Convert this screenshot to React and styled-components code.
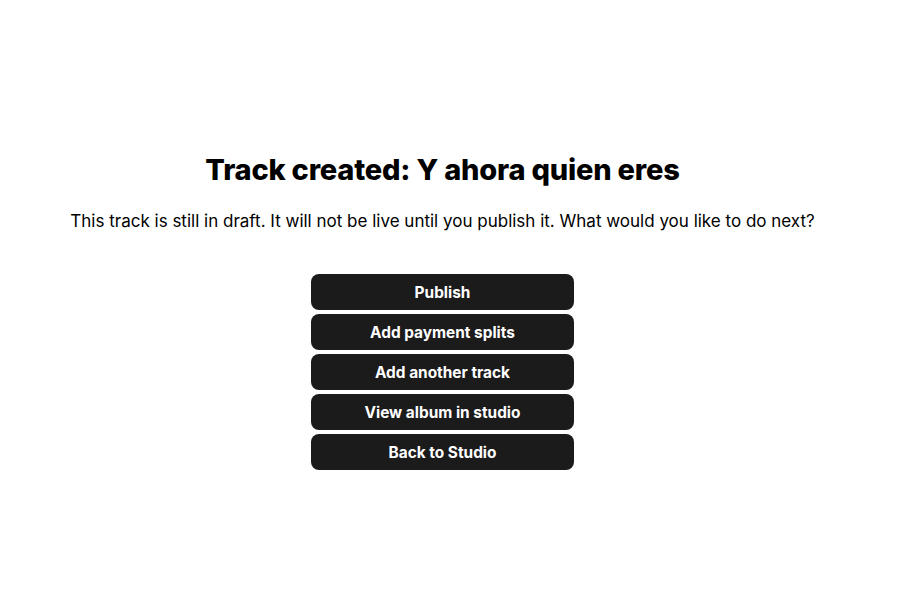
import React from 'react';
import styled, { createGlobalStyle } from 'styled-components';

const GlobalStyle = createGlobalStyle`
  html, body {
    margin: 0;
    padding: 0;
    background: #ffffff;
  }
  body {
    font-family: Inter, "Noto Sans", sans-serif;
    color: #000000;
  }
`;

const Page = styled.main`
  width: 885px;
  min-height: 589px;
  display: flex;
  flex-direction: column;
  align-items: center;
  padding-top: 150px;
  box-sizing: border-box;
`;

const Title = styled.h1`
  margin: 0;
  font-size: 29px;
  font-weight: 800;
  letter-spacing: -0.2px;
  line-height: 40px;
`;

const Lead = styled.p`
  margin: 19px 0 0;
  font-size: 17px;
  font-weight: 400;
  line-height: 24px;
`;

const Actions = styled.div`
  margin-top: 41px;
  width: 263px;
  display: flex;
  flex-direction: column;
  gap: 4px;
`;

const ActionButton = styled.button`
  height: 36px;
  border: none;
  border-radius: 8px;
  background: #1b1b1b;
  color: #ffffff;
  font-family: inherit;
  font-size: 15.4px;
  font-weight: 700;
  cursor: pointer;
`;

const actions = [
  'Publish',
  'Add payment splits',
  'Add another track',
  'View album in studio',
  'Back to Studio',
];

const App = () => {
  return (
    <>
      <GlobalStyle />
      <Page>
        <Title>Track created: Y ahora quien eres</Title>
        <Lead>
          This track is still in draft. It will not be live until you publish it. What would you
          like to do next?
        </Lead>
        <Actions>
          {actions.map((label) => (
            <ActionButton key={label}>{label}</ActionButton>
          ))}
        </Actions>
      </Page>
    </>
  );
};

export default App;
